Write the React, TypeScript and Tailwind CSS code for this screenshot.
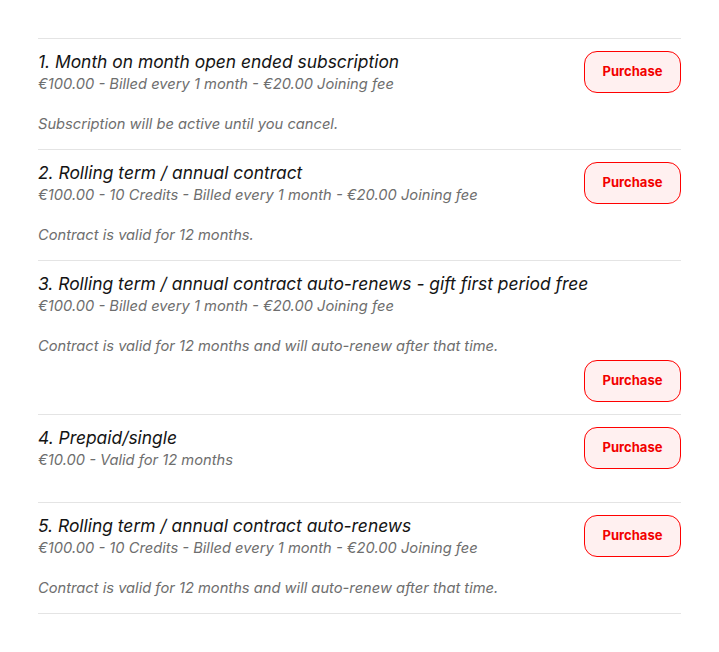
import React from "react";

type Plan = {
  title: string;
  price: string;
  note?: string;
  buttonBelow?: boolean;
};

const plans: Plan[] = [
  {
    title: "1. Month on month open ended subscription",
    price: "€100.00 - Billed every 1 month - €20.00 Joining fee",
    note: "Subscription will be active until you cancel.",
  },
  {
    title: "2. Rolling term / annual contract",
    price: "€100.00 - 10 Credits - Billed every 1 month - €20.00 Joining fee",
    note: "Contract is valid for 12 months.",
  },
  {
    title: "3. Rolling term / annual contract auto-renews - gift first period free",
    price: "€100.00 - Billed every 1 month - €20.00 Joining fee",
    note: "Contract is valid for 12 months and will auto-renew after that time.",
    buttonBelow: true,
  },
  {
    title: "4. Prepaid/single",
    price: "€10.00 - Valid for 12 months",
  },
  {
    title: "5. Rolling term / annual contract auto-renews",
    price: "€100.00 - 10 Credits - Billed every 1 month - €20.00 Joining fee",
    note: "Contract is valid for 12 months and will auto-renew after that time.",
  },
];

const PurchaseButton = () => (
  <button className="h-[42px] w-[97px] shrink-0 rounded-[13px] border border-[#ff0000] bg-[#fff0f0] text-[13px] font-bold text-[#f20000]">
    Purchase
  </button>
);

const PlanRow = ({ plan }: { plan: Plan }) => (
  <div className="border-b border-[#e4e4e4] pt-[11px]">
    <div className="flex items-start justify-between">
      <div className="italic">
        <h3 className="text-[17.4px] leading-[24px] text-[#141414]">{plan.title}</h3>
        <p className="text-[14.7px] leading-[20px] text-[#6e6e6e]">{plan.price}</p>
      </div>
      {!plan.buttonBelow && (
        <div className="pt-[1px]">
          <PurchaseButton />
        </div>
      )}
    </div>
    {plan.note ? (
      <p className="mt-[20px] pb-[15px] text-[14.7px] italic leading-[20px] text-[#6e6e6e]">
        {plan.note}
      </p>
    ) : (
      <div className="h-[32px]" />
    )}
    {plan.buttonBelow && (
      <div className="-mt-[11px] flex justify-end pb-[12px]">
        <PurchaseButton />
      </div>
    )}
  </div>
);

export default function App() {
  return (
    <div
      className="min-h-screen bg-white px-[38px] pt-[38px]"
      style={{ fontFamily: "Inter, 'Noto Sans', sans-serif" }}
    >
      <div className="w-[643px] border-t border-[#e4e4e4]">
        {plans.map((p) => (
          <PlanRow key={p.title} plan={p} />
        ))}
      </div>
    </div>
  );
}
